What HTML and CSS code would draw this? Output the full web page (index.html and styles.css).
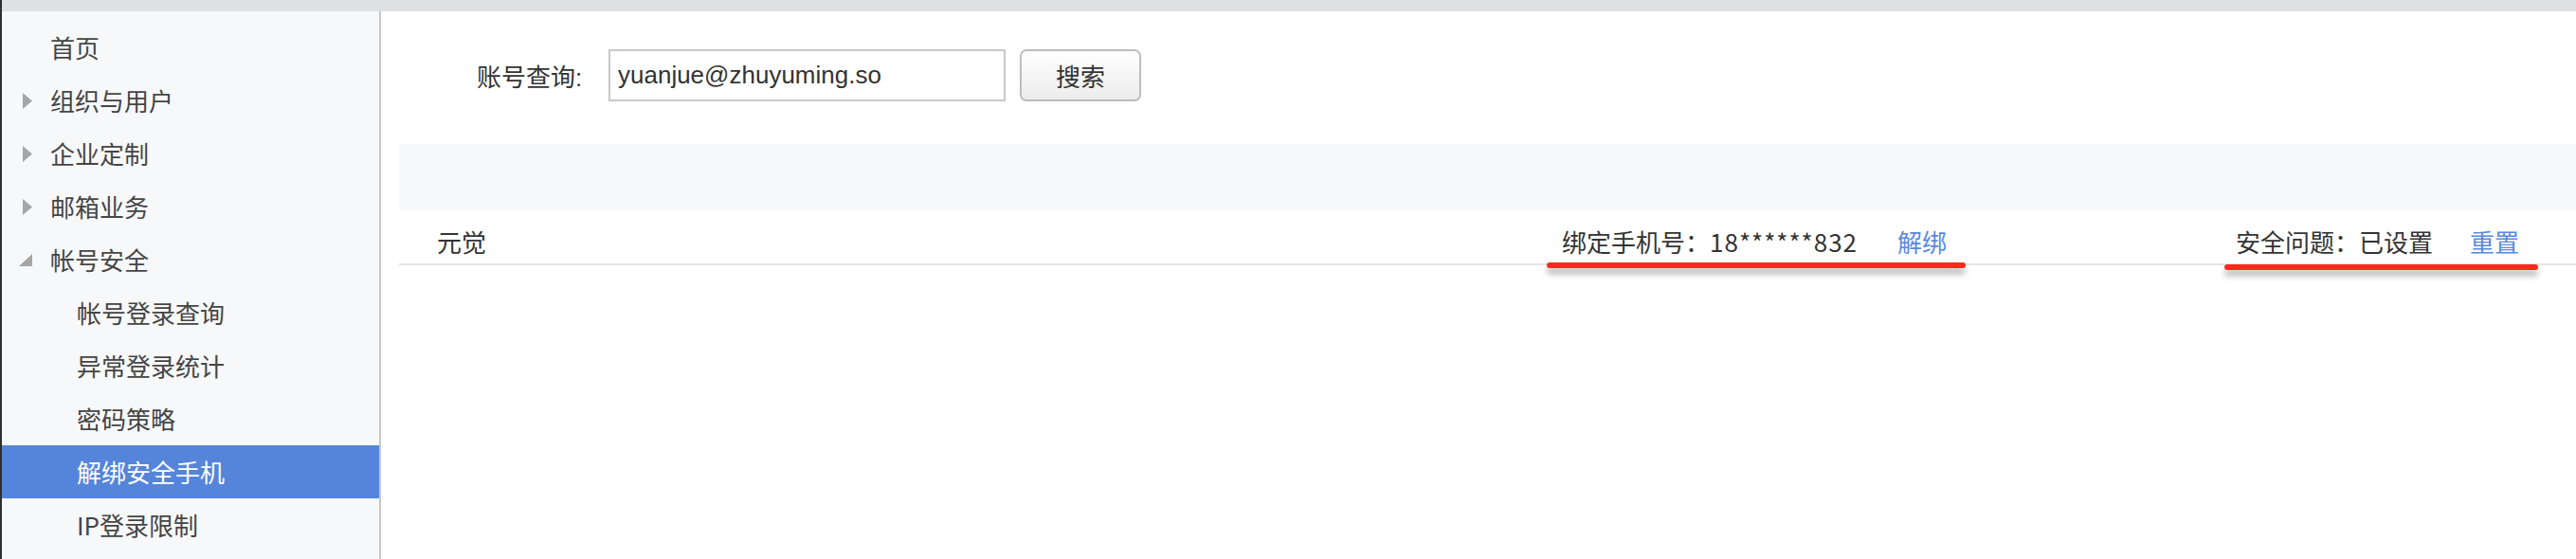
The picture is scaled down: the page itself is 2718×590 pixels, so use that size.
FILE: index.html
```html
<!DOCTYPE html>
<html lang="zh-CN">
<head>
<meta charset="utf-8">
<title>解绑安全手机</title>
<link rel="stylesheet" href="styles.css">
</head>
<body>
<div class="topbar"></div>
<div class="layout">
  <nav class="sidebar">
    <div class="nav-item"><span class="arrow"></span>首页</div>
    <div class="nav-item"><span class="arrow"><svg width="10" height="17" viewBox="0 0 10 17"><polygon points="0,0 10,8.5 0,17" fill="#a6a6a6"/></svg></span>组织与用户</div>
    <div class="nav-item"><span class="arrow"><svg width="10" height="17" viewBox="0 0 10 17"><polygon points="0,0 10,8.5 0,17" fill="#a6a6a6"/></svg></span>企业定制</div>
    <div class="nav-item"><span class="arrow"><svg width="10" height="17" viewBox="0 0 10 17"><polygon points="0,0 10,8.5 0,17" fill="#a6a6a6"/></svg></span>邮箱业务</div>
    <div class="nav-item"><span class="arrow"><svg width="14" height="13" viewBox="0 0 14 13"><polygon points="14,0 14,13 0,13" fill="#a6a6a6"/></svg></span>帐号安全</div>
    <div class="nav-item sub">帐号登录查询</div>
    <div class="nav-item sub">异常登录统计</div>
    <div class="nav-item sub">密码策略</div>
    <div class="nav-item sub active">解绑安全手机</div>
    <div class="nav-item sub">IP登录限制</div>
  </nav>
  <main class="main">
    <form class="search">
      <label class="search-label">账号查询:</label>
      <input class="search-input" type="text" value="yuanjue@zhuyuming.so">
      <button class="search-btn" type="button">搜索</button>
    </form>
    <div class="band"></div>
    <div class="row">
      <div class="cell">元觉</div>
      <div class="cell">绑定手机号：<span class="num">18******832</span><a class="link">解绑</a></div>
      <div class="cell">安全问题：已设置<a class="link link-tight">重置</a></div>
    </div>
  </main>
</div>
<div class="mark mark-phone"></div>
<div class="mark mark-question"></div>
</body>
</html>
```

FILE: styles.css
```css
html, body {
  margin: 0;
  padding: 0;
}
body {
  width: 2718px;
  height: 590px;
  overflow: hidden;
  box-sizing: border-box;
  border-left: 2px solid #2e2e2e;
  background: #ffffff;
  font-family: "Noto Sans CJK SC", "Liberation Sans", sans-serif;
  position: relative;
}
.topbar {
  height: 12px;
  background: #dfe0e4;
}
.layout {
  display: flex;
  height: 578px;
}
.sidebar {
  width: 398px;
  flex: none;
  background: #f7f8fa;
  border-right: 2px solid #c6c6c6;
  padding-top: 10px;
}
.nav-item {
  height: 56px;
  line-height: 56px;
  font-size: 26px;
  color: #454545;
  display: flex;
  align-items: center;
  padding-left: 16px;
}
.arrow {
  width: 16px;
  margin-right: 19px;
  display: flex;
  justify-content: flex-end;
  align-items: center;
}
.arrow svg {
  display: block;
}
.nav-item.sub {
  padding-left: 79px;
}
.nav-item.active {
  background: #5585db;
  color: #ffffff;
}
.main {
  flex: 1;
  padding-top: 40px;
}
.search {
  display: flex;
  align-items: center;
  margin: 0 0 0 101px;
  height: 55px;
}
.search-label {
  width: 139px;
  font-family: "Liberation Sans", "Noto Sans CJK SC", sans-serif;
  font-size: 26px;
  color: #333333;
}
.search-input {
  box-sizing: border-box;
  width: 419px;
  height: 55px;
  border: 2px solid #c8c9cc;
  padding: 0 8px;
  margin: 0;
  font-family: "Liberation Sans", sans-serif;
  font-size: 26px;
  color: #333333;
  outline: none;
}
.search-btn {
  box-sizing: border-box;
  margin-left: 15px;
  width: 128px;
  height: 55px;
  border: 2px solid #bdbdbd;
  border-radius: 7px;
  background: linear-gradient(#ffffff, #ececec);
  font-family: "Noto Sans CJK SC", sans-serif;
  font-size: 26px;
  color: #333333;
  padding: 0;
}
.band {
  margin: 45px 0 0 19px;
  height: 70px;
  background: #f7f8fa;
}
.row {
  margin-left: 19px;
  display: grid;
  grid-template-columns: 1187px 711px auto;
  padding: 15px 0 5px 40px;
  border-bottom: 2px solid #e5e5e5;
  font-size: 26px;
  line-height: 36px;
  color: #333333;
}
.num {
  letter-spacing: 1px;
}
.link {
  color: #5a88df;
  margin-left: 42px;
  text-decoration: none;
}
.link-tight {
  margin-left: 39px;
}
.mark {
  position: absolute;
  height: 6px;
  background: #ff2a1c;
  border-radius: 4px;
  box-shadow: 0 6px 6px rgba(0, 0, 0, 0.3);
}
.mark-phone {
  left: 1630px;
  top: 277px;
  width: 442px;
}
.mark-question {
  left: 2345px;
  top: 279px;
  width: 331px;
}
```
